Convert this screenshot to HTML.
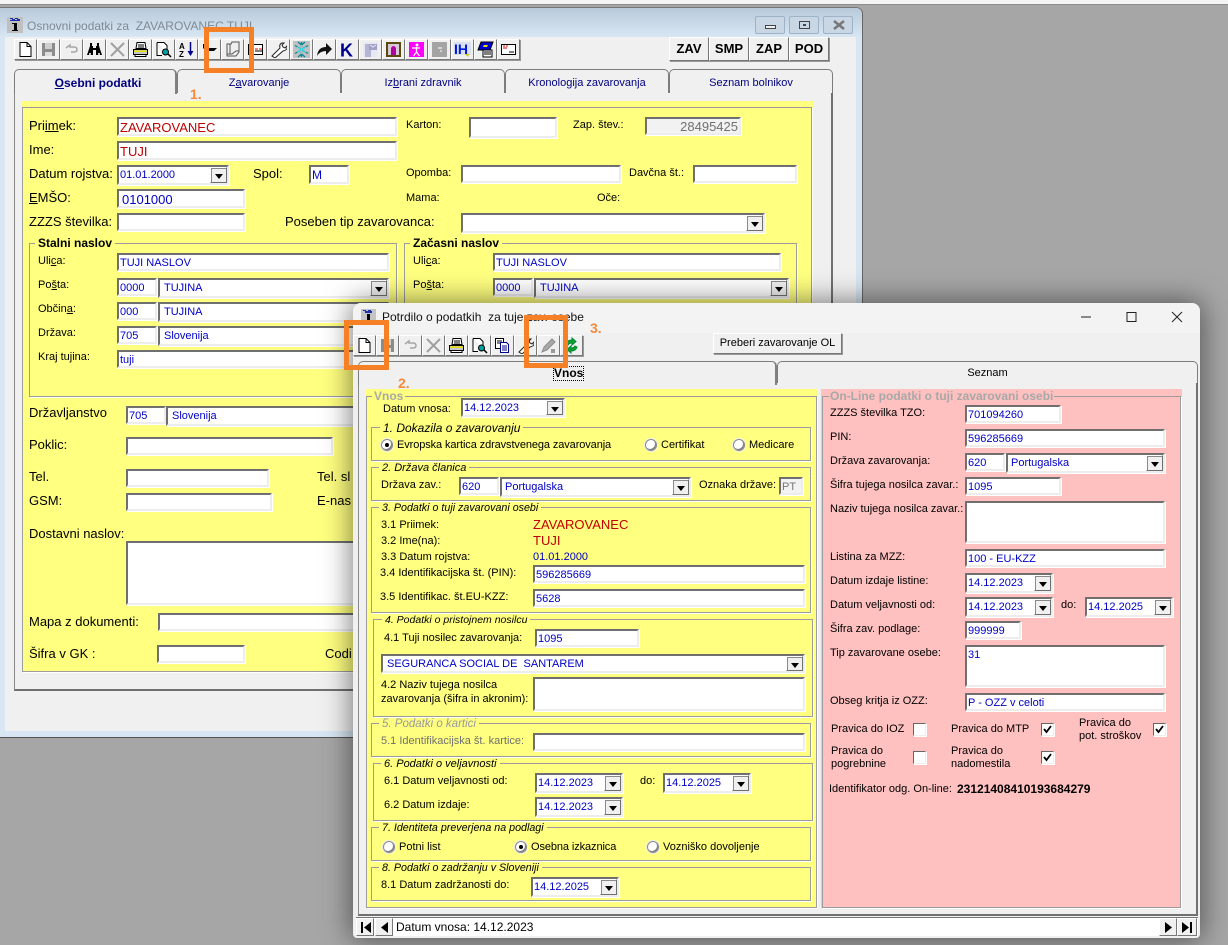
<!DOCTYPE html>
<html><head><meta charset="utf-8"><title>Potrdilo</title>
<style>
html,body{margin:0;padding:0;width:1228px;height:945px;overflow:hidden;background:#a6a6a6;font-family:"Liberation Sans",Arial,sans-serif}
div,span,svg{position:absolute;box-sizing:border-box}
.l{font-size:11px;line-height:14px;color:#000;white-space:nowrap;margin-top:1px}
.m{font-size:13px;line-height:16px;color:#000;white-space:nowrap}
.i{background:#fff;border:2px solid;border-color:#6f6f6f #ededed #ededed #6f6f6f;box-shadow:1px 1px 0 #fff;font-size:11px;color:#0000c8;white-space:nowrap;overflow:hidden;padding-left:1px;line-height:17px}
.r{color:#c00000;font-size:13px}
.b{right:0;top:0;bottom:0;width:17px;background:#f0f0f0;border:1px solid;border-color:#fff #6f6f6f #6f6f6f #fff;box-shadow:1px 1px 0 #8a8a8a inset}
.b:after{content:"";position:absolute;left:4px;top:6px;border:4px solid transparent;border-top:5px solid #000;border-bottom:0}
.t{width:23px;height:21px;background:#f0f0f0;border:1px solid;border-color:#fff #777 #777 #fff;box-shadow:1px 1px 0 #999}
.t svg{left:2px;top:1px;width:17px;height:17px}
.g{border:1px solid #9c9c9c;box-shadow:1px 1px 0 #fff}
.n{background:#ffff80;font-size:11px;line-height:13px;font-style:italic;padding:0 3px;white-space:nowrap;color:#000;margin-top:1px}
.n.p{color:#999}
.tb{background:#f0f0f0;border:1px solid #7c7c7c;border-bottom:0;border-radius:5px 5px 0 0;text-align:center;font-size:11px;color:#000080;line-height:20px}
.rad{width:12px;height:12px;border-radius:50%;background:#fff;border:1px solid #8a8a8a;box-shadow:-1px -1px 0 #777 inset,0 0 0 1px #eee}
.rad.on:after{content:"";position:absolute;left:3px;top:3px;width:4px;height:4px;border-radius:50%;background:#000}
.cb{width:13px;height:13px;background:#fff;border:1px solid;border-color:#666 #eee #eee #666;box-shadow:1px 1px 0 #fff}
.cb svg{left:0;top:0;width:11px;height:11px}
.o{border:5px solid #f58025;background:transparent}
.on{font-size:14px;font-weight:bold;color:#f58a3c;line-height:16px}
.btn{background:#f0f0f0;border:1px solid;border-color:#fff #777 #777 #fff;box-shadow:1px 1px 0 #999;text-align:center;white-space:nowrap}
.z{font-weight:bold;font-size:13px;line-height:22px;color:#000}
.nv{background:#f0f0f0;border:1px solid;border-color:#fff #777 #777 #fff}
</style></head><body>
<svg width="0" height="0" style="left:0;top:0"><defs>
<symbol id="new" viewBox="0 0 17 17"><path d="M3 1.500h7l4 4v10H3z" fill="#fff" stroke="#000"/><path d="M10 1.500v4h4" fill="none" stroke="#000"/></symbol>
<symbol id="save" viewBox="0 0 17 17"><path d="M2 2h13v13H2z" fill="#8c8c8c"/><path d="M5 2h7v6H5z" fill="#cfcfcf"/><path d="M5 11h7v4H5z" fill="#dedede"/></symbol>
<symbol id="undo" viewBox="0 0 17 17"><path d="M3 7l4-3v2h4q3 0 3 2.500t-3 2.500H8" fill="none" stroke="#a6a6a6" stroke-width="1.500"/></symbol>
<symbol id="x" viewBox="0 0 17 17"><path d="M2 2l13 13M15 2L2 15" stroke="#a0a0a0" stroke-width="2"/></symbol>
<symbol id="print" viewBox="0 0 17 17"><path d="M5 1.500h8l1 6H4z" fill="#fff" stroke="#000"/><path d="M1.500 8.500h14v5h-14z" fill="#c8c8c8" stroke="#000"/><path d="M2 9.500h13v1.500H2z" fill="#e8e000"/><path d="M3 13.500h11v2H3z" fill="#fff" stroke="#000"/><path d="M6 4h6M6 6h6" stroke="#000"/></symbol>
<symbol id="prev" viewBox="0 0 17 17"><path d="M2 1.500h7l3 3v6M7 14.500H2v-13" fill="#fff" stroke="#000"/><circle cx="10.500" cy="11" r="3" fill="#00a0a0" stroke="#000"/><path d="M13 13l3 3" stroke="#000" stroke-width="1.500"/></symbol>
<symbol id="wr" viewBox="0 0 17 17"><path d="M2 15l8-8q-1-4 2-5l2 0-2 2 1 2 2 1 2-2q1 4-4 5l-8 7z" fill="#fff" stroke="#222"/></symbol>
</defs></svg>

<!-- desktop strip -->
<div style="left:0;top:0;width:1228px;height:4px;background:#f4f4f4"></div>
<div style="left:0;top:4px;width:1228px;height:1px;background:#8e8e8e"></div>

<!-- WINDOW 1 -->
<div style="left:0;top:7px;width:863px;height:731px;background:#d8e6f3;border-radius:0 7px 0 0;border-right:1px solid #666;border-bottom:1px solid #555;border-top:1px solid #777"></div>
<div style="left:0;top:8px;width:862px;height:29px;background:linear-gradient(#b8c9da,#d8e6f3);border-radius:0 7px 0 0"></div>
<svg style="left:7px;top:17px" width="16" height="16" viewBox="0 0 16 16"><rect width="16" height="16" fill="#c0c0c0"/><path d="M3 1h3v1H3zM8 1h3v1H8zM5 2h3v1H5zM10 2h3v1h-3zM3 3h10v1H3z" fill="#1c2fb0"/><path d="M7 6h3v8H7zM5 6h2v1H5zM5 13h6v1H5z" fill="#000"/></svg>
<div class="l" style="left:27px;top:18px;font-size:12px;color:#7f8a94">Osnovni podatki za&nbsp; ZAVAROVANEC TUJI</div>
<div style="left:755px;top:16px;width:30px;height:18px;background:#c9d6e4;border:1px solid #9fb3c8;border-radius:2px"><div style="left:9px;top:8px;width:11px;height:4px;border:1px solid #444;background:#eee"></div></div>
<div style="left:789px;top:16px;width:30px;height:18px;background:#c9d6e4;border:1px solid #9fb3c8;border-radius:2px"><div style="left:9px;top:4px;width:11px;height:8px;border:1px solid #444"></div><div style="left:13px;top:7px;width:3px;height:2px;background:#444"></div></div>
<div style="left:823px;top:16px;width:30px;height:18px;background:#c9d6e4;border:1px solid #9fb3c8;border-radius:2px"><svg style="left:9px;top:3px" width="12" height="10"><path d="M1 1l10 8M11 1L1 9" stroke="#777" stroke-width="2.500"/></svg></div>
<div style="left:5px;top:37px;width:851px;height:694px;background:#f0f0f0"></div>

<!-- toolbar 1 -->
<div class="t" style="left:14px;top:39px"><svg><use href="#new"/></svg></div>
<div class="t" style="left:37px;top:39px"><svg><use href="#save"/></svg></div>
<div class="t" style="left:60px;top:39px"><svg><use href="#undo"/></svg></div>
<div class="t" style="left:83px;top:39px"><svg viewBox="0 0 17 17"><path d="M4 2h2v3h1v2h3V5h1V2h2v3l3 9H10V9H7v5H1l3-9z" fill="#000"/><circle cx="4" cy="13" r="1" fill="#fff"/><circle cx="13" cy="13" r="1" fill="#fff"/></svg></div>
<div class="t" style="left:106px;top:39px"><svg><use href="#x"/></svg></div>
<div class="t" style="left:129px;top:39px"><svg><use href="#print"/></svg></div>
<div class="t" style="left:152px;top:39px"><svg><use href="#prev"/></svg></div>
<div class="t" style="left:175px;top:39px"><svg viewBox="0 0 17 17"><text x="1" y="8" font-size="8" font-weight="bold" fill="#000" font-family="Liberation Sans">A</text><text x="1" y="16" font-size="8" font-weight="bold" fill="#000" font-family="Liberation Sans">Z</text><path d="M12.500 1v13" stroke="#000090" stroke-width="1.500"/><path d="M9.500 10l3 5 3-5z" fill="#000090"/></svg></div>
<div class="t" style="left:198px;top:39px"><svg viewBox="0 0 17 17"><path d="M2 3h4v3l2 1h8l-3 3H8l-1 5H4V9L2 7z" fill="#000"/></svg></div>
<div class="t" style="left:221px;top:39px"><svg viewBox="0 0 17 17"><path d="M3 3h4l1-2h7v10l-3 4H3z" fill="#eee" stroke="#555"/><path d="M6 3v10M3 13h5l4-3h3" fill="none" stroke="#555"/></svg></div>
<div class="t" style="left:244px;top:39px"><svg viewBox="0 0 17 17"><path d="M1.500 3.500h14v10h-14z" fill="#fff" stroke="#000"/><path d="M8 8h3M12 8h3" stroke="#e00000"/><path d="M8 10h7" stroke="#000"/></svg></div>
<div class="t" style="left:267px;top:39px"><svg><use href="#wr"/></svg></div>
<div class="t" style="left:290px;top:39px"><svg viewBox="0 0 17 17"><rect width="17" height="17" fill="#c0c0c0"/><path d="M8.500 1v15M2 4.500l13 8M15 4.500l-13 8M5 1l3.500 3L12 1M5 16l3.500-3 3.500 3" stroke="#008a9a" fill="none" stroke-width="1.300"/><path d="M8.500 4v9M4 6l9 5M13 6l-9 5" stroke="#30f0ff"/></svg></div>
<div class="t" style="left:313px;top:39px"><svg viewBox="0 0 17 17"><path d="M1 15q1-9 9-9V2l6 6-6 6v-4q-6 0-9 5z" fill="#111"/></svg></div>
<div class="t" style="left:336px;top:39px"><svg viewBox="0 0 17 17"><text x="1" y="15.500" font-size="18" font-weight="bold" fill="#000090" font-family="Liberation Sans">K</text></svg></div>
<div class="t" style="left:359px;top:39px"><svg viewBox="0 0 17 17"><rect x="1" y="1" width="15" height="15" fill="#e8e8f4"/><path d="M3 3h6v13H3z" fill="#b4b4d4"/><path d="M7 3h8v6H7z" fill="#a0a0c8"/><path d="M8 4l3 2 3-2" stroke="#e8e8f4" fill="none"/></svg></div>
<div class="t" style="left:382px;top:39px"><svg viewBox="0 0 17 17"><rect x="1" y="1" width="15" height="15" fill="#5a4a10"/><rect x="3" y="3" width="11" height="11" fill="#d8c8d8"/><path d="M6 14V7q2.500-4 5 0v7z" fill="#b000a0"/></svg></div>
<div class="t" style="left:405px;top:39px"><svg viewBox="0 0 17 17"><rect x="1" y="1" width="15" height="15" fill="#ff00ff"/><circle cx="9" cy="4" r="1.500" fill="#fff"/><path d="M4 7h8M8.500 6v5l-3 4M8.500 11l3 4" stroke="#fff" stroke-width="1.300" fill="none"/></svg></div>
<div class="t" style="left:428px;top:39px"><svg viewBox="0 0 17 17"><rect x="1" y="1" width="15" height="15" fill="#a4a4a4"/><path d="M7 7h4M9 10h2" stroke="#fff"/></svg></div>
<div class="t" style="left:451px;top:39px"><svg viewBox="0 0 17 17"><rect x="0" y="1" width="17" height="13" fill="#d8e0f0"/><text x="0" y="13" font-size="14" font-weight="bold" fill="#0018d8" font-family="Liberation Sans">IH</text><path d="M11 13l3 3 1-3z" fill="#d8c000"/></svg></div>
<div class="t" style="left:474px;top:39px"><svg viewBox="0 0 17 17"><path d="M4 1h12l-3 8H1z" fill="#0000c8" stroke="#000"/><path d="M7 4h4l-1 2H6z" fill="#e8e000"/><path d="M6 9h9v7H6z" fill="#fff" stroke="#000"/><path d="M7 11h7M7 13h7" stroke="#000"/></svg></div>
<div class="t" style="left:497px;top:39px"><svg viewBox="0 0 17 17"><path d="M1.500 3.500h14v10h-14z" fill="#fff" stroke="#000"/><path d="M3 5h2M6 5h2M3 7h4" stroke="#e00000"/><path d="M9 11h5" stroke="#000"/></svg></div>

<div class="btn z" style="left:669px;top:37px;width:40px;height:24px">ZAV</div>
<div class="btn z" style="left:709px;top:37px;width:40px;height:24px">SMP</div>
<div class="btn z" style="left:749px;top:37px;width:40px;height:24px">ZAP</div>
<div class="btn z" style="left:789px;top:37px;width:40px;height:24px">POD</div>

<!-- tabs 1 -->
<div style="left:14px;top:92px;width:819px;height:599px;background:#f0f0f0;border:1px solid #8a8a8a;border-top:1px solid #8a8a8a;border-right:2px solid #707070;border-bottom:2px solid #707070"></div>
<div class="tb" style="left:177px;top:69px;width:164px;height:24px"><span style="left:0;right:0;top:3px">Z<u>a</u>varovanje</span></div>
<div class="tb" style="left:341px;top:69px;width:164px;height:24px"><span style="left:0;right:0;top:3px">Iz<u>b</u>rani zdravnik</span></div>
<div class="tb" style="left:505px;top:69px;width:164px;height:24px"><span style="left:0;right:0;top:3px">Kronologija zavarovanja</span></div>
<div class="tb" style="left:669px;top:69px;width:164px;height:24px"><span style="left:0;right:0;top:3px">Seznam bolnikov</span></div>
<div class="tb" style="left:14px;top:69px;width:163px;height:25px;border-right:2px solid #808080;font-weight:bold;font-size:12px"><span style="left:6px;right:0;top:3px"><u>O</u>sebni podatki</span></div>

<div style="left:21px;top:101px;width:792px;height:571px;background:#ffff80"></div>
<div class="g" style="left:22px;top:107px;width:790px;height:565px"></div>

<div class="m" style="left:29px;top:118px">Pri<u>im</u>ek:</div>
<div class="i r" style="left:117px;top:117px;width:280px;height:19px">ZAVAROVANEC</div>
<div class="m" style="left:29px;top:142px">Ime:</div>
<div class="i r" style="left:117px;top:141px;width:280px;height:19px;font-size:13px">TUJI</div>
<div class="m" style="left:29px;top:166px">Datum ro<u>j</u>stva:</div>
<div class="i" style="left:117px;top:165px;width:112px;height:20px">01.01.2000<div class="b"></div></div>
<div class="m" style="left:253px;top:166px">Spol:</div>
<div class="i" style="left:309px;top:165px;width:40px;height:19px;font-size:12px">M</div>
<div class="m" style="left:29px;top:190px"><u>E</u>MŠO:</div>
<div class="i" style="left:117px;top:189px;width:128px;height:19px;font-size:13px;padding-left:3px">0101000</div>
<div class="m" style="left:29px;top:214px">ZZZS številka:</div>
<div class="i" style="left:117px;top:213px;width:128px;height:18px"></div>
<div class="l" style="left:406px;top:117px">Karton:</div>
<div class="i" style="left:469px;top:117px;width:88px;height:21px"></div>
<div class="l" style="left:573px;top:117px">Zap. štev.:</div>
<div class="i" style="left:645px;top:117px;width:96px;height:18px;background:#f2f2f2;color:#707070;text-align:right;font-size:13px;line-height:15px;padding-right:1px">28495425</div>
<div class="l" style="left:406px;top:165px">Opomba:</div>
<div class="i" style="left:461px;top:165px;width:160px;height:18px"></div>
<div class="l" style="left:629px;top:165px">Davčna št.:</div>
<div class="i" style="left:693px;top:165px;width:104px;height:18px"></div>
<div class="l" style="left:406px;top:189px;margin-top:2px">Mama:</div>
<div class="l" style="left:597px;top:189px;margin-top:2px">Oče:</div>
<div class="m" style="left:285px;top:214px">Poseben tip zavarovanca:</div>
<div class="i" style="left:461px;top:213px;width:304px;height:20px"><div class="b"></div></div>

<div class="g" style="left:29px;top:243px;width:368px;height:154px"></div>
<div class="n" style="left:35px;top:236px;font-style:normal;font-weight:bold;font-size:12px;padding:0 3px">Stalni naslov</div>
<div class="g" style="left:404px;top:243px;width:393px;height:120px"></div>
<div class="n" style="left:410px;top:236px;font-style:normal;font-weight:bold;font-size:12px;padding:0 3px">Začasni naslov</div>

<div class="l" style="left:38px;top:253px">Uli<u>c</u>a:</div>
<div class="i" style="left:117px;top:253px;width:272px;height:18px">TUJI NASLOV</div>
<div class="l" style="left:38px;top:277px">Po<u>š</u>ta:</div>
<div class="i" style="left:117px;top:278px;width:40px;height:18px">0000</div>
<div class="i" style="left:158px;top:278px;width:231px;height:20px;padding-left:4px">TUJINA<div class="b"></div></div>
<div class="l" style="left:38px;top:301px">Občin<u>a</u>:</div>
<div class="i" style="left:117px;top:302px;width:40px;height:18px">000</div>
<div class="i" style="left:158px;top:302px;width:231px;height:20px;padding-left:4px">TUJINA<div class="b"></div></div>
<div class="l" style="left:38px;top:325px">Država:</div>
<div class="i" style="left:117px;top:326px;width:40px;height:18px">705</div>
<div class="i" style="left:158px;top:326px;width:231px;height:20px;padding-left:4px">Slovenija<div class="b"></div></div>
<div class="l" style="left:38px;top:349px">Kraj tujina:</div>
<div class="i" style="left:117px;top:350px;width:272px;height:18px">tuji</div>

<div class="l" style="left:413px;top:253px">Uli<u>c</u>a:</div>
<div class="i" style="left:493px;top:253px;width:288px;height:18px">TUJI NASLOV</div>
<div class="l" style="left:413px;top:277px">Po<u>š</u>ta:</div>
<div class="i" style="left:493px;top:278px;width:40px;height:18px">0000</div>
<div class="i" style="left:534px;top:278px;width:255px;height:20px;padding-left:4px">TUJINA<div class="b"></div></div>

<div class="m" style="left:29px;top:405px">Državljanstvo</div>
<div class="i" style="left:126px;top:406px;width:40px;height:18px">705</div>
<div class="i" style="left:166px;top:406px;width:220px;height:20px;padding-left:4px">Slovenija</div>
<div class="m" style="left:29px;top:437px">Poklic:</div>
<div class="i" style="left:126px;top:437px;width:207px;height:18px"></div>
<div class="m" style="left:29px;top:469px">Tel.</div>
<div class="i" style="left:126px;top:469px;width:143px;height:18px"></div>
<div class="m" style="left:317px;top:469px">Tel. sl</div>
<div class="m" style="left:29px;top:493px">GSM:</div>
<div class="i" style="left:126px;top:493px;width:146px;height:18px"></div>
<div class="m" style="left:317px;top:493px">E-nas</div>
<div class="m" style="left:29px;top:526px">Dostavni naslov:</div>
<div class="i" style="left:126px;top:541px;width:240px;height:64px"></div>
<div class="m" style="left:29px;top:614px">Mapa z dokumenti:</div>
<div class="i" style="left:158px;top:613px;width:210px;height:18px"></div>
<div class="m" style="left:29px;top:646px">Šifra v GK :</div>
<div class="i" style="left:157px;top:645px;width:88px;height:18px"></div>
<div class="m" style="left:325px;top:646px">Codi</div>

<!-- callouts window 1 -->
<div class="o" style="left:204px;top:27px;width:50px;height:46px"></div>
<div class="on" style="left:190px;top:86px">1.</div>

<!-- WINDOW 2 -->
<div style="left:353px;top:303px;width:847px;height:635px;background:#f0f0f0;border-radius:8px 8px 4px 4px;box-shadow:0 0 28px 2px rgba(0,0,0,.5)"></div>
<div style="left:353px;top:303px;width:847px;height:30px;background:#f3f3f3;border-radius:8px 8px 0 0"></div>
<svg style="left:361px;top:309px" width="15" height="15" viewBox="0 0 15 15"><rect width="15" height="15" fill="#c4c4c4"/><path d="M2 1h3v1H2zM7 1h3v1H7zM4 2h7v2H4z" fill="#1c2fb0"/><path d="M6 5h3v9H6z" fill="#000"/></svg>
<div class="l" style="left:382px;top:309px;font-size:12px;color:#111">Potrdilo o podatkih&nbsp; za tuje zav. osebe</div>
<svg style="left:1076px;top:310px" width="110" height="14"><path d="M5 7h10" stroke="#222"/><path d="M51 2.500h9v9h-9z" fill="none" stroke="#222"/><path d="M96 2l10 10M106 2L96 12" stroke="#222"/></svg>

<div class="t" style="left:353px;top:335px"><svg><use href="#new"/></svg></div>
<div class="t" style="left:376px;top:335px"><svg><use href="#save"/></svg></div>
<div class="t" style="left:399px;top:335px"><svg><use href="#undo"/></svg></div>
<div class="t" style="left:422px;top:335px"><svg><use href="#x"/></svg></div>
<div class="t" style="left:445px;top:335px"><svg><use href="#print"/></svg></div>
<div class="t" style="left:468px;top:335px"><svg><use href="#prev"/></svg></div>
<div class="t" style="left:491px;top:335px"><svg viewBox="0 0 17 17"><path d="M1.500 1.500h8v10h-8z" fill="#fff" stroke="#000"/><path d="M6.500 5.500h6l2 2v8h-8z" fill="#fff" stroke="#000090"/><path d="M8 9h5M8 11h5M8 13h5" stroke="#000090"/><path d="M3 4h5M3 6h3" stroke="#000"/></svg></div>
<div class="t" style="left:514px;top:335px"><svg><use href="#wr"/></svg></div>
<div class="t" style="left:537px;top:335px"><svg viewBox="0 0 17 17"><path d="M2 15l2-5 8-8 3 3-8 8z" fill="#a8a8a8" stroke="#8c8c8c"/><path d="M11 12h4v4h-4z" fill="#999"/></svg></div>
<div class="t" style="left:560px;top:335px"><svg viewBox="0 0 17 17"><path d="M3 7q1-4 6-4V1l4 3.500L9 8V6Q6 6 5 8z" fill="#10a030" stroke="#083"/><path d="M14 10q-1 4-6 4v2l-4-3.500L8 9v2q3 0 4-2z" fill="#10a030" stroke="#083"/></svg></div>

<div class="btn" style="left:713px;top:333px;width:129px;height:21px;font-size:11px;line-height:19px">Preberi zavarovanje OL</div>

<!-- tabs 2 -->
<div style="left:358px;top:382px;width:840px;height:534px;background:#f0f0f0;border:1px solid #8a8a8a;border-right:2px solid #707070;border-bottom:2px solid #707070"></div>
<div class="tb" style="left:777px;top:361px;width:421px;height:22px;color:#000"><span style="left:0;right:0;top:1px">Seznam</span></div>
<div class="tb" style="left:358px;top:361px;width:419px;height:24px;border-right:2px solid #808080"></div>
<div style="left:553px;top:366px;width:31px;height:15px;border:1px dotted #000;font-size:12px;font-weight:bold;line-height:13px;text-align:center;white-space:nowrap">Vnos</div>

<div style="left:365px;top:389px;width:452px;height:519px;background:#ffff80"></div>
<div style="left:821px;top:389px;width:361px;height:519px;background:#ffc0c0"></div>
<div class="g" style="left:366px;top:396px;width:451px;height:512px"></div>
<div class="g" style="left:822px;top:396px;width:359px;height:512px"></div>
<div class="n" style="left:372px;top:389px;font-style:normal;font-weight:bold;font-size:12px;color:#a8a8a8;padding:0 2px">Vnos</div>
<div class="n" style="left:829px;top:389px;font-style:normal;font-weight:bold;font-size:12px;color:#a8a8a8;background:#ffc0c0;padding:0 1px">On-Line podatki o tuji zavarovani osebi</div>

<div class="l" style="left:383px;top:401px">Datum vnosa:</div>
<div class="i" style="left:461px;top:398px;width:104px;height:19px">14.12.2023<div class="b"></div></div>

<div class="g" style="left:371px;top:427px;width:440px;height:34px"></div>
<div class="n" style="left:380px;top:421px;font-size:12px">1. Dokazila o zavarovanju</div>
<div class="rad on" style="left:381px;top:439px"></div>
<div class="l" style="left:397px;top:437px;letter-spacing:-.1px">Evropska kartica zdravstvenega zavarovanja</div>
<div class="rad" style="left:645px;top:439px"></div>
<div class="l" style="left:661px;top:437px">Certifikat</div>
<div class="rad" style="left:733px;top:439px"></div>
<div class="l" style="left:749px;top:437px">Medicare</div>

<div class="g" style="left:371px;top:467px;width:440px;height:34px"></div>
<div class="n" style="left:379px;top:461px">2. Država članica</div>
<div class="l" style="left:381px;top:477px">Država zav.:</div>
<div class="i" style="left:459px;top:477px;width:40px;height:18px">620</div>
<div class="i" style="left:500px;top:477px;width:191px;height:20px;padding-left:3px">Portugalska<div class="b"></div></div>
<div class="l" style="left:699px;top:477px">Oznaka države:</div>
<div class="i" style="left:779px;top:477px;width:24px;height:18px;background:#f2f2f2;color:#777">PT</div>

<div class="g" style="left:371px;top:507px;width:440px;height:106px"></div>
<div class="n" style="left:379px;top:501px;font-size:10.700px">3. Podatki o tuji zavarovani osebi</div>
<div class="l" style="left:381px;top:517px">3.1 Priimek:</div>
<div class="m" style="left:533px;top:517px;color:#c00000">ZAVAROVANEC</div>
<div class="l" style="left:381px;top:533px">3.2 Ime(na):</div>
<div class="m" style="left:533px;top:533px;color:#c00000">TUJI</div>
<div class="l" style="left:381px;top:549px">3.3 Datum rojstva:</div>
<div class="l" style="left:533px;top:549px;color:#0000c8">01.01.2000</div>
<div class="l" style="left:380px;top:565px">3.4 Identifikacijska št. (PIN):</div>
<div class="i" style="left:533px;top:565px;width:272px;height:18px">596285669</div>
<div class="l" style="left:380px;top:589px">3.5 Identifikac. št.EU-KZZ:</div>
<div class="i" style="left:533px;top:589px;width:272px;height:18px">5628</div>

<div class="g" style="left:373px;top:619px;width:440px;height:98px"></div>
<div class="n" style="left:382px;top:613px;font-size:10.500px">4. Podatki o pristojnem nosilcu</div>
<div class="l" style="left:384px;top:630px">4.1 Tuji nosilec zavarovanja:</div>
<div class="i" style="left:535px;top:629px;width:104px;height:18px">1095</div>
<div class="i" style="left:381px;top:654px;width:424px;height:19px;padding-left:4px">SEGURANCA SOCIAL DE&nbsp; SANTAREM<div class="b"></div></div>
<div class="l" style="left:381px;top:677px">4.2 Naziv tujega nosilca<br><span style="position:static;line-height:13px">zavarovanja (šifra in akronim):</span></div>
<div class="i" style="left:533px;top:677px;width:272px;height:34px"></div>

<div class="g" style="left:371px;top:723px;width:440px;height:34px"></div>
<div class="n p" style="left:379px;top:717px;font-size:11.500px">5. Podatki o kartici</div>
<div class="l" style="left:381px;top:733px;color:#707070">5.1 Identifikacijska št. kartice:</div>
<div class="i" style="left:533px;top:733px;width:272px;height:18px"></div>

<div class="g" style="left:373px;top:763px;width:440px;height:58px"></div>
<div class="n" style="left:381px;top:757px">6. Podatki o veljavnosti</div>
<div class="l" style="left:384px;top:773px">6.1 Datum veljavnosti od:</div>
<div class="i" style="left:535px;top:773px;width:88px;height:20px">14.12.2023<div class="b"></div></div>
<div class="l" style="left:640px;top:773px">do:</div>
<div class="i" style="left:663px;top:773px;width:88px;height:20px">14.12.2025<div class="b"></div></div>
<div class="l" style="left:384px;top:797px">6.2 Datum izdaje:</div>
<div class="i" style="left:535px;top:797px;width:88px;height:20px">14.12.2023<div class="b"></div></div>

<div class="g" style="left:371px;top:827px;width:440px;height:34px"></div>
<div class="n" style="left:379px;top:821px;font-size:10.700px">7. Identiteta preverjena na podlagi</div>
<div class="rad" style="left:383px;top:841px"></div>
<div class="l" style="left:399px;top:839px">Potni list</div>
<div class="rad on" style="left:515px;top:841px"></div>
<div class="l" style="left:531px;top:839px;letter-spacing:-.1px">Osebna izkaznica</div>
<div class="rad" style="left:647px;top:841px"></div>
<div class="l" style="left:663px;top:839px">Vozniško dovoljenje</div>

<div class="g" style="left:371px;top:867px;width:440px;height:34px"></div>
<div class="n" style="left:379px;top:861px;font-size:10.700px">8. Podatki o zadržanju v Sloveniji</div>
<div class="l" style="left:381px;top:877px">8.1 Datum zadržanosti do:</div>
<div class="i" style="left:531px;top:877px;width:88px;height:20px">14.12.2025<div class="b"></div></div>

<!-- pink -->
<div class="l" style="left:830px;top:405px">ZZZS številka TZO:</div>
<div class="i" style="left:965px;top:405px;width:96px;height:18px">701094260</div>
<div class="l" style="left:830px;top:429px">PIN:</div>
<div class="i" style="left:965px;top:429px;width:200px;height:18px">596285669</div>
<div class="l" style="left:830px;top:453px">Država zavarovanja:</div>
<div class="i" style="left:965px;top:453px;width:40px;height:18px">620</div>
<div class="i" style="left:1006px;top:453px;width:159px;height:20px;padding-left:3px">Portugalska<div class="b"></div></div>
<div class="l" style="left:830px;top:477px">Šifra tujega nosilca zavar.:</div>
<div class="i" style="left:965px;top:477px;width:96px;height:18px">1095</div>
<div class="l" style="left:830px;top:501px">Naziv tujega nosilca zavar.:</div>
<div class="i" style="left:965px;top:501px;width:200px;height:42px"></div>
<div class="l" style="left:830px;top:549px">Listina za MZZ:</div>
<div class="i" style="left:965px;top:549px;width:200px;height:18px">100 - EU-KZZ</div>
<div class="l" style="left:830px;top:573px">Datum izdaje listine:</div>
<div class="i" style="left:965px;top:573px;width:88px;height:20px">14.12.2023<div class="b"></div></div>
<div class="l" style="left:830px;top:597px">Datum veljavnosti od:</div>
<div class="i" style="left:965px;top:597px;width:88px;height:20px">14.12.2023<div class="b"></div></div>
<div class="l" style="left:1061px;top:597px">do:</div>
<div class="i" style="left:1085px;top:597px;width:88px;height:20px">14.12.2025<div class="b"></div></div>
<div class="l" style="left:830px;top:621px">Šifra zav. podlage:</div>
<div class="i" style="left:965px;top:621px;width:56px;height:18px">999999</div>
<div class="l" style="left:830px;top:645px">Tip zavarovane osebe:</div>
<div class="i" style="left:965px;top:645px;width:200px;height:42px">31</div>
<div class="l" style="left:830px;top:693px">Obseg kritja iz OZZ:</div>
<div class="i" style="left:965px;top:693px;width:200px;height:18px">P - OZZ v celoti</div>

<div class="l" style="left:831px;top:721px">Pravica do IOZ</div>
<div class="cb" style="left:913px;top:723px"></div>
<div class="l" style="left:951px;top:721px">Pravica do MTP</div>
<div class="cb" style="left:1041px;top:723px"><svg viewBox="0 0 11 11"><path d="M2 5l2.500 3L9 2" fill="none" stroke="#000" stroke-width="1.800"/></svg></div>
<div class="l" style="left:1079px;top:716px;line-height:13px">Pravica do<br>pot. stroškov</div>
<div class="cb" style="left:1153px;top:723px"><svg viewBox="0 0 11 11"><path d="M2 5l2.500 3L9 2" fill="none" stroke="#000" stroke-width="1.800"/></svg></div>
<div class="l" style="left:831px;top:744px;line-height:13px">Pravica do<br>pogrebnine</div>
<div class="cb" style="left:913px;top:751px"></div>
<div class="l" style="left:951px;top:744px;line-height:13px">Pravica do<br>nadomestila</div>
<div class="cb" style="left:1041px;top:751px"><svg viewBox="0 0 11 11"><path d="M2 5l2.500 3L9 2" fill="none" stroke="#000" stroke-width="1.800"/></svg></div>
<div class="l" style="left:829px;top:781px">Identifikator odg. On-line:</div>
<div class="l" style="left:957px;top:781px;font-weight:bold;font-size:12px">23121408410193684279</div>

<!-- status bar -->
<div style="left:356px;top:917px;width:842px;height:19px;background:#fff;border-top:1px solid #777"></div>
<div class="nv" style="left:356px;top:918px;width:18px;height:18px"><svg style="left:2px;top:2px" width="13" height="13"><path d="M2 1h2v11H2zM12 1v11L5 6.500z" fill="#000"/></svg></div>
<div class="nv" style="left:375px;top:918px;width:18px;height:18px"><svg style="left:2px;top:2px" width="13" height="13"><path d="M10 1v11L3 6.500z" fill="#000"/></svg></div>
<div class="l" style="left:396px;top:919px;font-size:12px">Datum vnosa: 14.12.2023</div>
<div class="nv" style="left:1159px;top:918px;width:18px;height:18px"><svg style="left:2px;top:2px" width="13" height="13"><path d="M3 1v11l7-5.500z" fill="#000"/></svg></div>
<div class="nv" style="left:1177px;top:918px;width:20px;height:18px"><svg style="left:3px;top:2px" width="13" height="13"><path d="M1 1v11l7-5.500zM9 1h2v11H9z" fill="#000"/></svg></div>

<!-- callouts window 2 -->
<div class="o" style="left:344px;top:320px;width:45px;height:50px"></div>
<div class="o" style="left:524px;top:315px;width:44px;height:53px"></div>
<div class="on" style="left:398px;top:375px">2.</div>
<div class="on" style="left:590px;top:320px">3.</div>
</body></html>
